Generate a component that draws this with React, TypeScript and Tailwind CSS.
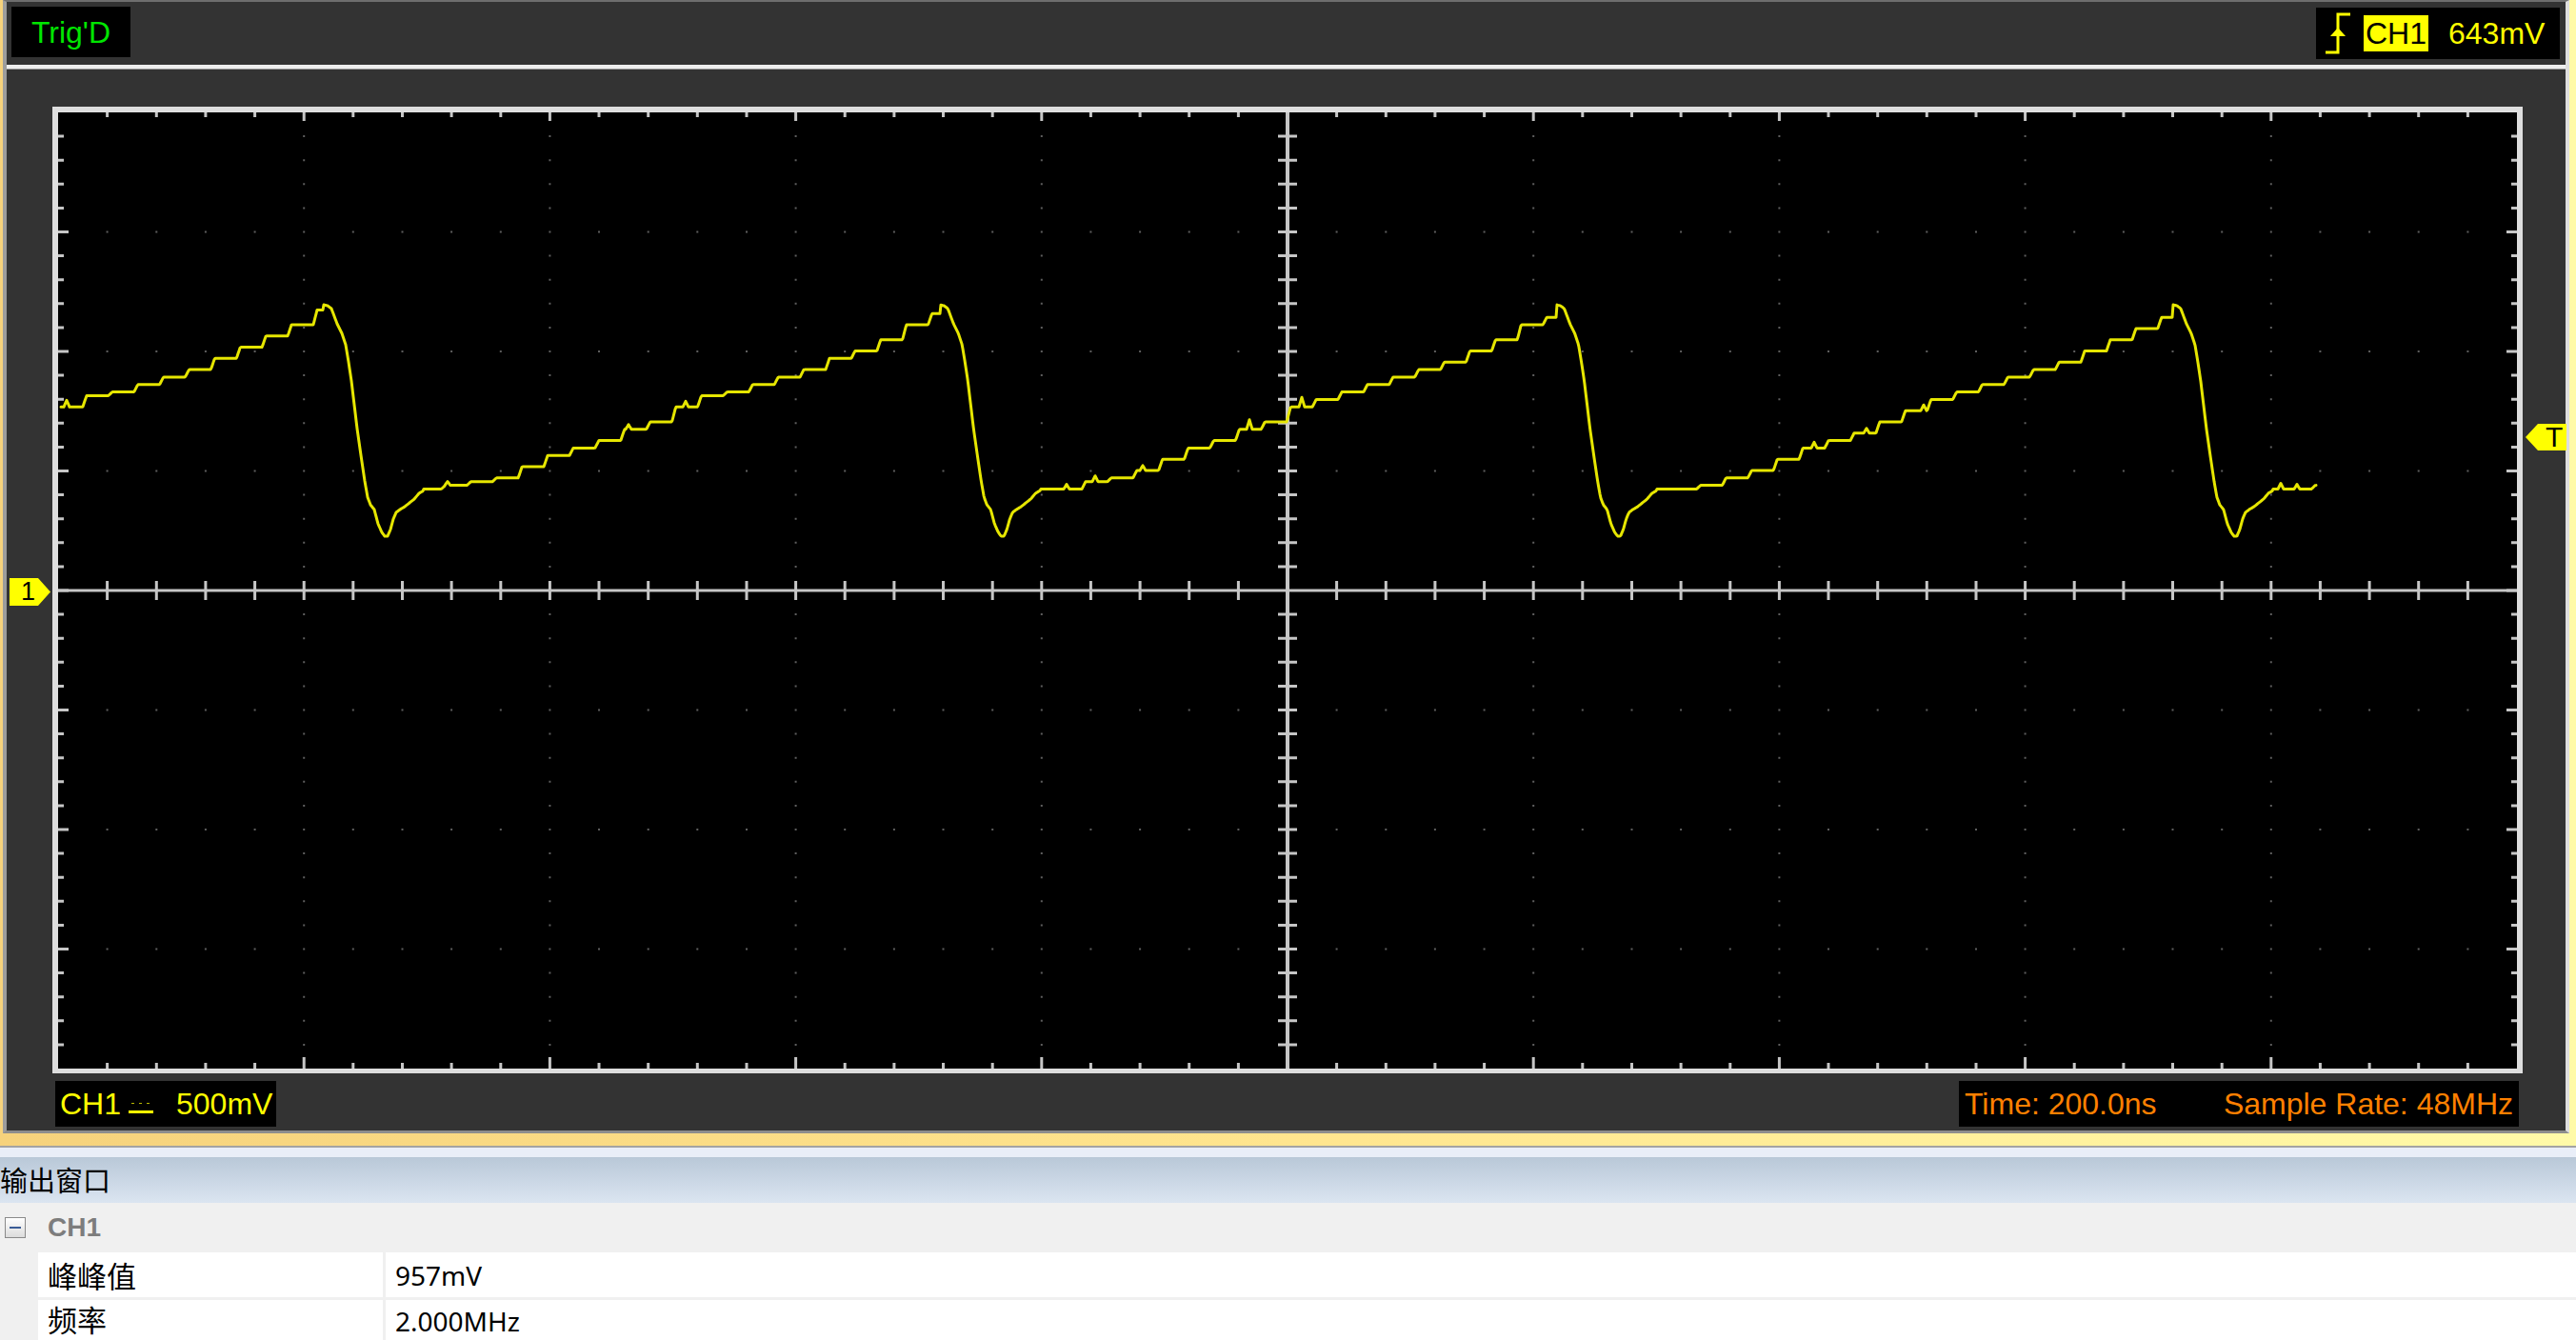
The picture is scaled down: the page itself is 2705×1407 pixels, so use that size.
import React from "react";

const W = 2582;
const H = 1004;
const DX = W / 10;
const DY = H / 8;
const MX = DX / 5;
const MY = DY / 5;
const CX = W / 2;
const CY = H / 2;
const OX = 61;
const OY = 118;

function buildDots(): string {
  let s = "";
  for (let i = 1; i <= 9; i++) {
    if (i === 5) continue;
    const x = i * DX;
    for (let k = 1; k <= 39; k++) {
      const y = k * MY;
      s += `M${(x - 1).toFixed(1)} ${(y - 1).toFixed(1)}h2v2h-2Z`;
    }
  }
  for (let j = 1; j <= 7; j++) {
    if (j === 4) continue;
    const y = j * DY;
    for (let k = 1; k <= 49; k++) {
      const x = k * MX;
      s += `M${(x - 1).toFixed(1)} ${(y - 1).toFixed(1)}h2v2h-2Z`;
    }
  }
  return s;
}

function buildTicks(): string {
  let s = "";
  for (let k = 1; k <= 39; k++) {
    if (k === 20) continue;
    const y = k * MY;
    s += `M${CX - 10} ${y.toFixed(1)}H${CX + 10}`;
  }
  for (let k = 1; k <= 49; k++) {
    if (k === 25) continue;
    const x = k * MX;
    s += `M${x.toFixed(1)} ${CY - 10}V${CY + 10}`;
  }
  for (let k = 1; k <= 49; k++) {
    const x = k * MX;
    const l = k % 5 === 0 ? 9 : 5;
    s += `M${x.toFixed(1)} 0V${l}`;
    const lb = k % 5 === 0 ? 12 : 6;
    s += `M${x.toFixed(1)} ${H}V${H - lb}`;
  }
  for (let k = 1; k <= 39; k++) {
    const y = k * MY;
    const l = k % 5 === 0 ? 11 : 6;
    s += `M0 ${y.toFixed(1)}H${l}`;
    s += `M${W} ${y.toFixed(1)}H${W - l}`;
  }
  return s;
}

const P0 = 340;
const PER = 647.3;
const FALL: [number, number][] = [
  [0, 320], [4, 321], [8, 324], [11, 332], [14, 340], [19, 350], [23, 362], [26, 380],
  [29, 400], [32, 425], [35, 450], [39, 478], [43, 505], [46, 522], [49, 530], [53, 535],
  [57, 550], [61, 559], [64, 563], [67, 563], [70, 556], [73, 545], [76, 538], [80, 535],
  [85, 532], [90, 528], [95, 524], [100, 518], [105, 515],
];
const RAMP: [number, number][] = [
  [105, 515], [180, 503], [250, 474], [340, 444], [385, 420], [450, 405], [520, 382],
  [580, 358], [620, 337], [637, 333], [641, 323], [PER, 320],
];
const SPIKES: [number, number][] = [
  [70, 7], [470, 4], [660, 5], [720, 6], [1120, 5], [1150, 6], [1200, 5], [1312, 10],
  [1367, 10], [1905, 6], [1960, 5], [2020, 6], [2395, 6], [2412, 5],
];

function interp(a: [number, number][], d: number): number {
  for (let i = 1; i < a.length; i++) {
    if (d <= a[i][0]) {
      const [x0, y0] = a[i - 1];
      const [x1, y1] = a[i];
      return y0 + ((y1 - y0) * (d - x0)) / (x1 - x0);
    }
  }
  return a[a.length - 1][1];
}

function buildWave(): string {
  const SP = 26.9;
  const S0 = 64;
  const q = (v: number) => Math.round(v / 3.92) * 3.92;
  const pts: string[] = [];
  for (let x = 64; x <= 2432; x++) {
    const k = Math.floor((x - P0) / PER);
    const Pk = P0 + k * PER;
    const dx = x - Pk;
    let y: number;
    if (dx < 105) {
      y = interp(FALL, dx);
    } else {
      const n = Math.floor((x - S0) / SP);
      const xs = S0 + n * SP;
      const frac = x - xs;
      const rv = (xx: number) => q(interp(RAMP, Math.min(Math.max(xx - Pk, 105), PER)));
      const v0 = rv(xs);
      const v1 = rv(xs + SP);
      y = frac > SP - 4 ? v0 + ((v1 - v0) * (frac - (SP - 4))) / 4 : v0;
    }
    for (const [c, a] of SPIKES) {
      const d = Math.abs(x - c);
      if (d < 3) y -= a * (1 - d / 3);
    }
    pts.push(`${pts.length ? "L" : "M"}${x - OX} ${(y - OY).toFixed(1)}`);
  }
  return pts.join("");
}

const DOTS = buildDots();
const TICKS = buildTicks();
const WAVE = buildWave();

function Plot() {
  return (
    <svg width={W} height={H} viewBox={`0 0 ${W} ${H}`} className="block">
      <rect x={0} y={0} width={W} height={H} fill="#000" />
      <path d={DOTS} fill="#5e5e5e" />
      <line x1={CX} y1={0} x2={CX} y2={H} stroke="#c6c6c6" strokeWidth={4} />
      <line x1={0} y1={CY} x2={W} y2={CY} stroke="#c6c6c6" strokeWidth={3} />
      <path d={TICKS} stroke="#c6c6c6" strokeWidth={3} fill="none" />
      <path
        d={WAVE}
        stroke="#e6e600"
        strokeWidth={3}
        fill="none"
        strokeLinejoin="round"
        strokeLinecap="round"
      />
    </svg>
  );
}

function TrigIcon() {
  return (
    <svg width="28" height="44" viewBox="0 0 28 44" className="block">
      <path d="M1 42H14V2H27" stroke="#ffff00" strokeWidth="3" fill="none" />
      <path d="M6 25L14 16L22 25Z" fill="#ffff00" />
    </svg>
  );
}

function DcIcon() {
  return (
    <svg width="26" height="16" viewBox="0 0 26 16" className="block">
      <rect x="3" y="3" width="3" height="1" fill="#b8b800" />
      <rect x="11" y="3" width="3" height="1" fill="#b8b800" />
      <rect x="19" y="3" width="3" height="1" fill="#b8b800" />
      <rect x="0" y="11" width="26" height="3" fill="#ffff00" />
    </svg>
  );
}

export default function App() {
  return (
    <div
      className="relative w-[2705px] h-[1407px] overflow-hidden bg-[#f0f0f0] flex flex-col"
      style={{ fontFamily: '"Liberation Sans", Arial, sans-serif' }}
    >
      <div className="h-[1203px] shrink-0 flex pl-[3px] pr-[7px] pb-[13px] bg-linear-to-r from-[#f6d27c] via-[#ffe58e] to-[#fffaa8]">
        <div className="flex-1 flex flex-col bg-[#333333] border-l-4 border-l-[#9c9c9c] border-r-4 border-r-[#dedede] border-t-2 border-t-[#6e6e6e] border-b-[3px] border-b-[#8d8d8d]">
          <div className="h-[66px] shrink-0 flex items-start justify-between pl-[5px] pr-[6px] pt-[5px]">
            <div className="h-[53px] w-[125px] bg-black flex items-center justify-center text-[32px] leading-none text-[#00e600]">
              Trig'D
            </div>
            <div className="mt-px h-[54px] w-[256px] bg-black flex items-center pl-[9px] text-[32px] leading-none">
              <TrigIcon />
              <span className="ml-[13px] h-[38px] px-[2px] bg-[#ffff00] text-black flex items-center">
                CH1
              </span>
              <span className="ml-[21px] text-[#ffff00]">643mV</span>
            </div>
          </div>
          <div className="h-[5px] shrink-0 bg-[#eeeeee] border-b border-b-[#a0a0a0]" />
          <div className="h-[1054px] shrink-0 pt-[39px] pl-[48px]">
            <div className="w-[2594px] h-[1015px] border-[6px] border-b-[5px] border-[#dedede] bg-black">
              <Plot />
            </div>
          </div>
          <div className="flex-1 flex items-start justify-between pt-[8px] pl-[51px] pr-[49px] text-[32px] leading-none">
            <div className="h-[48px] w-[232px] bg-black flex items-center pl-[5px] text-[#ffff00]">
              <span>CH1</span>
              <span className="ml-[8px] mt-[8px]">
                <DcIcon />
              </span>
              <span className="ml-[24px]">500mV</span>
            </div>
            <div className="h-[48px] w-[588px] bg-black flex items-center justify-between px-[6px] text-[#ff8000]">
              <span>Time: 200.0ns</span>
              <span>Sample Rate: 48MHz</span>
            </div>
          </div>
        </div>
      </div>

      <div className="h-[2px] shrink-0 bg-[#a3a3a3]" />
      <div className="h-[10px] shrink-0 bg-[#e9eef8]" />
      <div
        className="h-[48px] shrink-0 bg-linear-to-b from-[#b9c8d8] to-[#dbe5f1] flex items-center text-[29px] text-black"
        style={{ fontFamily: '"Noto Sans CJK SC", "Noto Sans", sans-serif' }}
      >
        输出窗口
      </div>
      <div
        className="flex-1 flex flex-col bg-[#f0f0f0]"
        style={{ fontFamily: '"Noto Sans", "Noto Sans CJK SC", sans-serif' }}
      >
        <div className="h-[52px] shrink-0 flex items-center">
          <div className="ml-[5px] w-[22px] h-[22px] border border-[#8a8a8a] bg-linear-to-b from-white to-[#dcdcdc] flex items-center justify-center">
            <div className="w-[12px] h-[2px] bg-[#3a5c96]" />
          </div>
          <span
            className="ml-[23px] text-[28px] font-bold text-[#7d7d7d] leading-none"
            style={{ fontFamily: '"Liberation Sans", Arial, sans-serif' }}
          >
            CH1
          </span>
        </div>
        <div className="h-[47px] shrink-0 flex">
          <div
            className="ml-[40px] w-[362px] bg-white pl-[10px] flex items-center text-[31px] leading-none text-black"
            style={{ fontFamily: '"Noto Sans CJK SC", sans-serif' }}
          >
            峰峰值
          </div>
          <div className="ml-[3px] flex-1 bg-white pl-[10px] flex items-center text-[28px] leading-none text-black">
            957mV
          </div>
        </div>
        <div className="h-[42px] shrink-0 flex mt-[3px]">
          <div
            className="ml-[40px] w-[362px] bg-white pl-[10px] pb-[4px] flex items-center text-[31px] leading-none text-black"
            style={{ fontFamily: '"Noto Sans CJK SC", sans-serif' }}
          >
            频率
          </div>
          <div className="ml-[3px] flex-1 bg-white pl-[10px] pt-[2px] flex items-center text-[28px] leading-none text-black">
            2.000MHz
          </div>
        </div>
      </div>

      <div className="absolute left-[10px] top-[607px] w-[44px] h-[29px]">
        <svg width="44" height="29" viewBox="0 0 44 29" className="absolute inset-0">
          <path d="M0 0H30L43 14.5L30 29H0Z" fill="#ffff00" />
        </svg>
        <span className="absolute left-[12px] top-0 h-[29px] flex items-center text-[27px] leading-none text-black">
          1
        </span>
      </div>
      <div className="absolute left-[2652px] top-[445px] w-[43px] h-[28px]">
        <svg width="43" height="28" viewBox="0 0 43 28" className="absolute inset-0">
          <path d="M0 14L13 0H43V28H13Z" fill="#ffff00" />
        </svg>
        <span className="absolute left-[21px] top-0 h-[28px] flex items-center text-[30px] leading-none text-black">
          T
        </span>
      </div>
    </div>
  );
}
